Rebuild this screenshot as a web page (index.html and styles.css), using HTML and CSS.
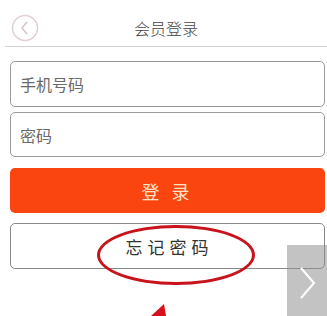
FILE: index.html
```html
<!DOCTYPE html>
<html lang="zh-CN">
<head>
    <meta charset="UTF-8">
    <meta name="viewport" content="width=device-width, initial-scale=1.0">
    <title>会员登录</title>
    <link rel="stylesheet" href="styles.css">
</head>
<body>
    <div class="page">
        <div class="header">
            <span class="back-button">
                <svg width="28" height="28" viewBox="0 0 28 28">
                    <circle cx="14" cy="14" r="12.5" fill="none" stroke="#e2cfd3" stroke-width="1.5"/>
                    <path d="M16 8 L11 14 L16 20" fill="none" stroke="#d9c3c8" stroke-width="1.5"/>
                </svg>
            </span>
            <h1 class="title">会员登录</h1>
            <span></span>
        </div>

        <form class="login-form">
            <div class="field">手机号码</div>
            <div class="field field-short">密码</div>
            <button type="button" class="login-button">登 录</button>
            <button type="button" class="forget-button">忘记密码</button>
        </form>

        <!-- annotation marks drawn over the screenshot -->
        <div class="circle-mark"></div>
        <svg class="arrow-mark" width="20" height="14" viewBox="0 0 20 14">
            <polygon points="14,0 1,12 16,12" fill="#d8101c"/>
        </svg>
        <div class="next-panel">
            <svg width="20" height="36" viewBox="0 0 20 36">
                <path d="M4 3 L17 18 L4 33" fill="none" stroke="#fff" stroke-width="2"/>
            </svg>
        </div>
    </div>
</body>
</html>
```

FILE: styles.css
```css
body {
    margin: 0;
    padding: 0;
    background-color: #fff;
    font-family: "Noto Sans CJK SC", "Noto Sans", sans-serif;
}
.page {
    position: relative;
    width: 327px;
    height: 316px;
    overflow: hidden;
}
.header {
    display: grid;
    grid-template-columns: 40px 1fr 40px;
    align-items: center;
    height: 47px;
    box-sizing: border-box;
    padding-top: 10px;
    margin-left: 5px;
    border-bottom: 1px solid #d2d2d2;
}
.back-button {
    display: flex;
    margin-left: 6px;
}
.title {
    margin: 0;
    font-size: 16px;
    font-weight: 300;
    color: #444;
    text-align: center;
}
.login-form {
    display: flex;
    flex-direction: column;
    padding: 14px 2px 0 10px;
}
.field {
    height: 46px;
    box-sizing: border-box;
    border: 1px solid #9a9a9a;
    border-radius: 5px;
    padding-left: 9px;
    display: flex;
    align-items: center;
    font-size: 16px;
    color: #6a6a6a;
}
.field-short {
    height: 45px;
    margin-top: 5px;
}
.login-button {
    height: 45px;
    margin-top: 11px;
    border: none;
    border-radius: 5px;
    background-color: #fa4510;
    color: #fde2c4;
    font-family: inherit;
    font-size: 18px;
    letter-spacing: 4px;
}
.forget-button {
    height: 46px;
    margin-top: 10px;
    border: 1px solid #8a8a8a;
    border-radius: 5px;
    background-color: #fff;
    color: #333;
    font-family: inherit;
    font-size: 17px;
    letter-spacing: 5px;
    padding-left: 10px;
}
.circle-mark {
    position: absolute;
    left: 97px;
    top: 225px;
    width: 152px;
    height: 54px;
    border: 3px solid #c8121c;
    border-radius: 50%;
}
.arrow-mark {
    position: absolute;
    left: 150px;
    top: 304px;
}
.next-panel {
    position: absolute;
    left: 287px;
    top: 245px;
    width: 40px;
    height: 71px;
    background-color: rgba(140, 140, 140, 0.52);
    display: flex;
    justify-content: center;
    padding-top: 20px;
    box-sizing: border-box;
}
```
